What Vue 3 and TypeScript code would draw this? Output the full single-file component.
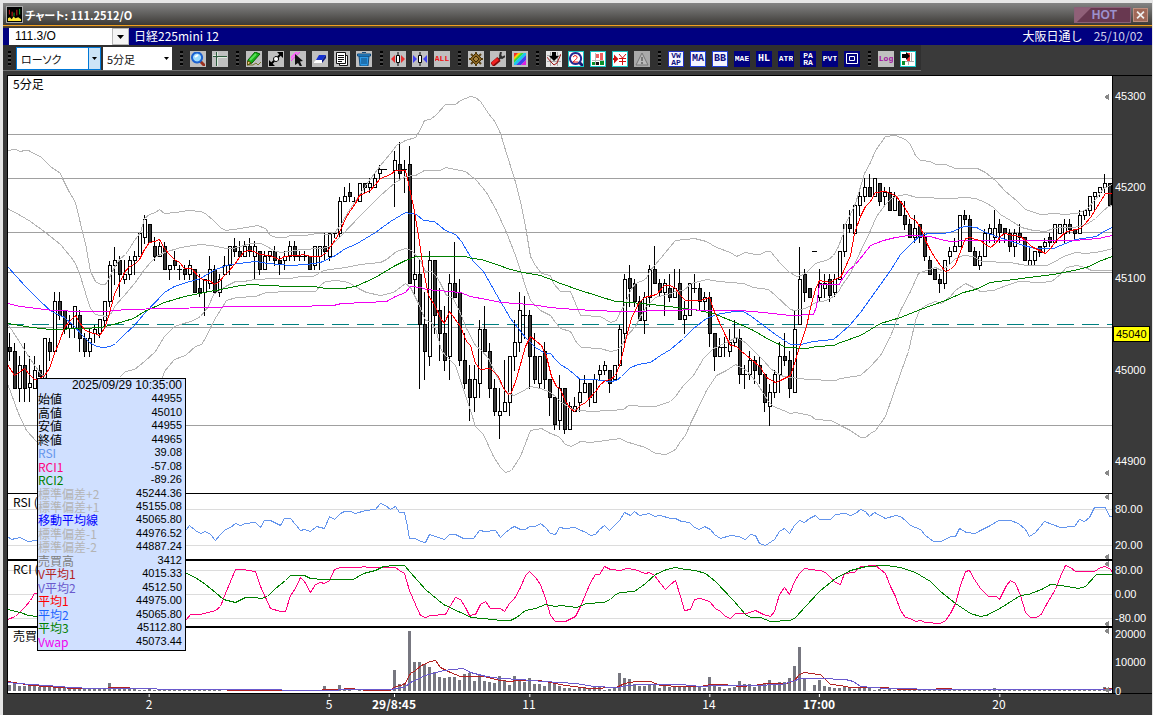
<script setup lang="ts">
import { ref } from 'vue'

type Origin = [number, number]
type Strip = [Origin, string]
interface Shape { d: string; f?: string; s?: string; w?: number }
interface Tool { name: string; bg?: string; border?: string; ink?: string; lines?: string[]; size?: string; shapes?: Shape[] }

/* Traces are digitised in strips: an origin in pixels, then points in thirds of a pixel. */
const A: Origin = [0, 90]
const B: Origin = [280, 90]
const C: Origin = [560, 90]
const D: Origin = [840, 90]
const L: Origin = [0, 370]
const E: Origin = [180, 480]
const F: Origin = [500, 480]
const G: Origin = [820, 480]

function trace(strips: Strip[]): string {
  return strips
    .flatMap(([[ox, oy], pts]) =>
      pts.split(' ').map((p) => {
        const [x, y] = p.split(',').map(Number)
        return `${Math.floor(ox + x / 3) + 0.5},${Math.floor(oy + y / 3) + 0.5}`
      }),
    )
    .join(' ')
}

const upper2 = trace([
  [A, '22,180 45,179 60,183 72,180 85,182 105,193 122,199 150,228 180,249 188,265 205,300 225,337 240,400 255,460 270,545 285,574 300,583 315,583 325,567 345,527 360,505 375,494 388,475 404,452 420,427 434,385 449,372 465,366 479,358 494,369 530,367 565,361 605,364 620,372 640,391 660,412 675,422 700,419 740,412 773,405 795,415 810,435 830,443'],
  [B, '15,443 30,437 75,436 110,431 150,432 165,425 180,405 205,365 240,310 265,275 300,225 330,190 350,167 375,151 405,141 420,117 433,90 450,88 470,73 497,44 525,43 540,31 570,19 585,22 600,35 625,70 645,98 660,130 680,190 703,265 720,335 735,410 750,500 765,525 785,550 810,555 820,580 840,604'],
  [C, '30,605 45,640 62,677 120,679 150,697 170,690 180,665 195,640 210,600 225,580 255,567 270,540 300,505 345,452 404,445 440,453 470,473 510,487 528,498 555,487 585,494 600,493 615,485 630,485 660,519 685,545 710,559 725,555 740,548 765,520 805,508 820,495 835,470 850,430'],
  [D, '14,405 30,372 45,340 74,250 90,218 105,180 135,140 165,137 195,147 212,162 225,197 242,212 270,215 285,222 315,222 345,235 412,235 435,247 465,270 495,305 530,330 555,357 600,374 650,370 670,373 710,371 740,358 765,328 790,295 817,283'],
])
const upper1 = trace([
  [A, '22,354 60,377 90,394 135,428 180,462 210,500 225,520 240,560 262,627 270,655 285,673 300,677 320,680 330,672 345,646 370,620 404,580 434,537 450,517 470,499 494,488 540,472 600,463 635,465 680,474 700,475 720,469 750,461 780,460 795,465 820,482 840,487'],
  [B, '30,485 60,478 125,476 150,470 180,438 240,375 300,315 345,277 375,258 405,255 433,242 480,240 497,233 555,245 570,255 590,272 620,307 650,360 680,427 705,495 720,540 735,590 750,630 780,662 810,675 825,697'],
  [C, '0,714 30,724 50,757 65,772 120,775 150,785 170,782 185,765 200,740 225,710 240,680 260,650 285,622 330,610 345,604 370,600 395,580 440,568 475,575 510,577 550,580 580,593 625,597 645,617 690,657 704,661 735,655 765,637 800,630 820,620 838,600'],
  [D, '0,592 30,550 60,485 90,420 110,378 135,342 150,328 165,320 180,315 200,312 230,321 330,324 380,321 405,324 435,337 460,352 480,372 510,392 545,412 580,422 615,425 640,415 660,412 700,412 740,404 765,385 790,360 805,350 817,347'],
])
const lower1 = trace([
  [A, '22,700 35,718 60,760 90,808 120,850 135,862 200,900 300,905 359,862 375,843 404,838 434,815 465,783 494,740 524,708 580,692 600,680 625,650 640,613 675,590 705,575 730,574 765,569 825,566'],
  [B, '30,565 60,560 100,558 130,542 195,533 240,523 300,518 320,508 350,485 375,474 395,480 420,510 435,545 455,545 470,560 480,580 500,615 520,625 540,670 560,715 585,765 605,782 625,805 650,855 675,905 700,916 720,907 750,888 780,895 810,908 830,922'],
  [C, '0,935 30,955 60,960 90,964 150,961 190,957 205,946 260,948 285,950 330,933 345,920 370,887 400,855 430,805 460,775 500,757 528,742 555,757 580,782 610,812 630,835 660,855 685,862 720,866 740,868 825,871'],
  [D, '0,865 60,857 90,830 120,795 150,740 180,660 210,605 235,550 260,540 285,532 305,540 325,525 345,505 370,496 400,500 425,515 510,517 560,525 620,526 640,517 670,498 705,488 740,491 785,483 817,475'],
])
const lower2 = trace([
  [A, '22,880 55,970 80,1020 110,1055 300,1050 470,900 487,862 494,843 524,808 555,795 585,770 604,762 620,738 635,705 650,680 680,632 710,623 765,620 800,607'],
  [B, '30,605 105,604 125,582 135,575 170,571 205,578 235,595 260,607 300,616 340,607 375,580 390,593 415,640 435,690 450,695 465,715 485,780 500,800 525,825 545,880 570,960 585,1008 610,1033 640,1098 660,1133 677,1147 695,1140 720,1100 750,1020 785,1016 810,1030 835,1038'],
  [C, '0,1044 15,1062 35,1070 60,1054 90,1056 180,1045 195,1055 255,1073 285,1090 320,1092 345,1077 360,1055 375,1035 390,1000 410,965 440,900 470,857 500,840 525,822 560,840 590,877 610,910 625,935 640,950 670,960 690,970 705,967 750,976 765,988 810,992 838,1002'],
  [D, '0,1005 30,1022 60,1042 75,1041 90,1030 105,1022 135,980 180,850 205,785 225,690 237,660 255,647 285,633 305,641 330,620 345,600 375,581 395,588 420,604 460,601 500,586 535,573 600,577 635,573 660,552 680,532 710,526 735,533 755,542 817,541'],
])
const average2 = trace([
  [A, '22,530 75,588 120,633 155,663 194,683 224,708 244,733 269,757 289,769 310,772 330,768 345,760 375,730 400,710 434,670 494,608 524,588 560,577 600,564 640,542 680,526 715,519 765,513 805,519'],
  [B, '30,525 80,522 120,517 165,497 195,475 225,462 285,427 330,395 375,367 410,374 430,390 462,395 497,422 525,433 545,453 580,513 610,545 650,613 690,685 735,742 765,773 795,790 810,791 825,807'],
  [C, '0,823 25,837 60,868 100,868 150,873 170,872 185,860 210,832 235,824 270,817 300,797 330,777 370,745 400,715 440,685 470,673 520,663 550,665 575,678 645,732 690,762 720,762 760,754 820,748'],
  [D, '0,730 30,703 60,667 90,625 120,583 150,542 180,493 210,463 240,435 265,430 310,430 340,424 360,412 380,408 410,412 430,424 470,440 505,452 550,466 585,474 640,474 660,465 705,449 770,439 790,424 817,412'],
])
const average1 = trace([
  [A, '22,822 44,857 60,845 74,835 89,852 104,867 118,865 134,857 149,835 164,790 179,753 194,713 209,695 225,677 239,697 254,718 269,727 284,730 299,735 314,715 325,680 344,613 359,580 374,547 389,530 404,523 419,508 434,477 449,457 464,453 479,448 494,474 509,492 524,507 539,517 554,534 575,535 599,562 613,570 629,572 644,584 659,573 674,555 689,540 704,524 719,502 734,485 749,481 764,483 779,492 809,497 839,508'],
  [B, '14,499 40,497 55,497 70,493 90,499 120,498 140,487 150,470 165,447 180,420 195,385 210,360 225,340 239,316 270,300 300,265 330,252 345,241 375,241 385,280 400,350 415,435 430,540 445,615 465,650 480,685 494,700 509,664 540,710 560,753 570,765 585,820 600,838 630,834 655,860 670,895 685,912 695,907 710,865 735,770 750,740 785,765 800,800 815,860 830,890 838,895'],
  [C, '0,898 15,935 30,955 44,963 60,945 75,937 105,903 120,883 135,870 150,868 165,855 179,826 189,780 200,740 215,685 235,640 254,621 290,614 314,586 330,587 345,595 360,617 375,630 420,631 449,621 460,657 475,690 495,735 510,765 530,770 545,785 570,805 600,832 620,862 645,877 660,870 690,857 700,830 715,780 740,710 755,640 765,598 779,572 810,577 830,565 838,563'],
  [D, '0,562 10,545 30,495 44,430 60,380 75,350 90,335 105,308 135,303 165,317 190,345 212,382 225,390 240,412 255,450 270,480 285,505 300,527 315,543 330,538 345,522 360,485 375,445 390,442 405,447 420,452 435,463 450,473 465,460 480,440 494,430 520,437 540,440 555,450 575,470 615,491 630,475 650,450 680,425 720,415 735,400 750,383 765,358 780,333 795,310 817,310'],
])
const average3 = trace([
  [A, '22,699 75,710 120,716 150,718 254,716 300,713 340,703 400,684 434,665 494,637 554,620 613,607 675,594 720,585 755,583 800,586'],
  [B, '30,589 100,589 140,595 190,595 225,588 285,561 340,528 375,510 410,499 555,499 575,505 605,507 650,523 690,537 730,547 780,557 820,570'],
  [C, '0,580 60,601 165,633 210,636 300,645 400,657 460,670 540,702 580,722 630,750 680,773 740,776 770,769 820,765'],
  [D, '0,758 60,735 120,700 180,682 240,658 315,630 370,606 405,597 450,578 500,572 545,564 640,553 700,542 740,532 785,512 817,499'],
])
const vwap = trace([
  [A, '22,641 60,648 110,656 160,660 245,664 320,664 375,659 500,655 640,652 700,649'],
  [B, '30,649 160,646 185,641 260,637 320,635 345,620 375,608 390,589 420,592 440,599 540,607 570,620 620,627 665,636 750,644 810,653'],
  [C, '0,655 100,660 180,664 340,661 400,657 420,660 540,662 610,667 690,675 760,673 770,650 779,583 838,583'],
  [D, '0,575 25,541 45,522 70,493 90,467 130,452 165,442 205,436 270,438 300,449 330,453 380,451 700,451 775,444 817,436'],
])
const priceLines = [
  { pts: upper2, color: '#b4b4b4' },
  { pts: upper1, color: '#b4b4b4' },
  { pts: lower1, color: '#b4b4b4' },
  { pts: lower2, color: '#b4b4b4' },
  { pts: average2, color: '#1e64ff' },
  { pts: average3, color: '#008000' },
  { pts: vwap, color: '#f000f0' },
  { pts: average1, color: '#ff0000' },
]

const rsi = trace([
  [L, '22,499 35,508 45,506 60,501 75,512 85,514 110,511'],
  [E, '18,147 28,137 45,150 60,160 75,154 90,163 105,181 120,162 135,148 150,142 165,130 180,135 195,130 225,127 240,142 254,121 270,121 300,137 314,115 330,115 345,133 360,151 374,147 390,154 410,140 433,145 449,109 464,118 480,100 494,94 512,94 527,100 555,92 585,88 601,70 615,75 630,87 645,78 658,97 674,98 682,140 688,175 705,175 720,184 735,188 748,163 793,179 808,163 825,163 850,175 880,175 899,151 915,154 945,151'],
  [F, '0,172 14,161 30,145 44,139 60,148 75,147 89,140 105,139 120,130 135,142 150,160 165,162 179,142 195,145 225,143 240,152 254,154 270,167 285,162 299,148 314,137 329,150 358,121 374,97 390,106 404,94 419,106 449,101 464,109 480,107 510,115 525,116 545,123 569,127 584,143 597,148 614,139 630,148 644,163 660,175 690,166 715,170 735,178 750,162 765,167 779,190 795,196 824,178 839,154 854,145 869,160 884,136 899,121 914,128 929,115 945,106 958,118'],
  [G, '0,118 30,118 45,104 75,100 90,106 105,100 120,88 135,94 149,109 164,97 195,115 225,105 240,110 255,120 270,136 300,147 315,166 340,184 360,184 375,179 390,168 405,169 419,145 440,156 465,160 480,150 510,137 535,121 570,121 595,131 615,148 629,169 645,157 673,124 720,142 762,139 779,118 794,123 809,111 824,83 855,83 869,109 877,109'],
])
const rci1 = trace([
  [L, '22,748 45,738 60,724 75,708 90,690 102,670 111,670 300,560 500,750'],
  [E, '18,418 30,404 60,404 105,391 120,380 135,340 150,305 165,268 190,268 205,272 225,275 240,318 255,352 270,386 300,394 315,394 330,345 345,325 360,292 374,303 390,337 405,314 420,307 434,311 449,300 464,268 480,262 540,262 550,260 565,262 645,262 658,272 673,280 688,330 705,373 720,405 735,412 750,406 795,403 810,375 827,351 840,357 855,382 869,405 885,404 900,373 915,364 930,385 955,385'],
  [F, '0,385 14,394 29,370 44,354 60,322 75,285 89,275 105,291 120,312 135,355 150,407 165,423 195,424 225,408 240,380 255,342 270,307 285,284 299,282 314,259 330,269 360,270 380,265 404,267 435,280 449,278 464,287 480,310 495,328 510,313 525,301 540,350 554,391 570,388 584,358 600,355 629,365 645,385 660,393 675,410 690,415 707,400 740,401 765,391 790,403 810,409 824,394 839,342 854,322 869,342 884,303 899,281 914,265 930,268 955,271'],
  [G, '0,271 15,278 30,292 45,308 60,313 74,281 104,277 120,258 165,256 180,269 195,280 210,320 225,348 240,390 255,411 270,414 285,424 300,421 315,427 360,430 375,421 390,400 405,370 420,315 435,275 449,271 464,297 480,325 505,348 530,350 539,357 560,315 571,300 585,310 600,345 615,397 630,411 645,412 660,405 680,373 705,328 720,290 735,256 750,261 765,274 824,274 840,261 855,260 870,267 877,278'],
])
const rci2 = trace([
  [L, '22,717 60,728 85,737 111,740 300,640 500,575'],
  [E, '18,280 45,292 75,312 105,338 130,358 165,368 195,353 220,352 245,356 262,350 285,325 315,302 330,287 372,287 390,296 430,297 520,298 550,281 585,270 610,260 645,256 673,256 690,278 735,328 790,373 840,397 875,411 940,419'],
  [F, '0,421 30,421 50,411 75,392 105,385 135,373 165,380 185,376 230,382 260,370 310,367 330,358 345,342 360,338 404,333 435,309 465,283 500,267 525,262 555,268 585,271 615,280 645,304 700,360 735,403 750,411 780,413 810,424 870,421 885,412 915,379 955,337'],
  [G, '0,331 45,295 90,272 140,260 200,256 240,262 285,276 330,303 360,334 405,370 450,400 480,409 500,405 545,382 600,347 625,342 665,328 690,313 720,316 775,325 795,319 829,283 877,283'],
])
const volumeAvg1 = trace([
  [L, '22,933 60,939 90,945 140,950 220,955 270,956 380,952 400,956'],
  [E, '0,629 130,629 150,632 420,631 430,629 470,628 515,625 560,630 630,631 645,620 673,612 690,580 705,570 725,555 750,545 765,541 780,563 810,577 840,589 910,589'],
  [F, '0,600 30,604 50,600 115,600 150,606 195,615 270,624 350,622 374,611 405,604 450,604 480,615 540,619 600,618 630,613 670,614 720,619 760,615 800,611 860,609 884,600 899,583 914,577 955,582'],
  [G, '0,583 15,598 30,614 60,616 90,622 195,623 240,627 320,628 380,625 410,628 845,628 860,625 877,625'],
])
const volumeAvg2 = trace([
  [L, '22,938 90,942 140,947 210,953 280,955 400,956'],
  [E, '0,628 135,629 470,630 480,628 550,629 635,628 645,625 673,621 690,607 735,587 790,571 850,565 870,577 920,589'],
  [F, '0,595 60,597 130,603 230,609 280,619 350,621 410,613 540,612 600,619 650,615 760,615 845,612 885,600 899,596 955,596'],
  [G, '0,595 75,598 100,604 120,619 200,624 380,627 877,628'],
])

/* One candle every 5px: high, body top, body bottom, low (thirds of a pixel), then w = rising, k = falling, d = flat; x = no trade. */
const candleData =
  '730,772,785,812,k;760,784,895,895,k;798,826,895,935,w;760,826,895,935,k;800,880,893,935,w;798,840,895,895,w;825,840,860,860,k;745,745,865,865,w;745,757,784,812,k;607,634,784,784,w;' +
  '607,634,676,688,k;662,662,715,730,k;675,703,715,742,w;648,648,716,742,w;662,675,745,785,k;730,745,785,800,k;715,745,785,800,w;705,718,730,757,w;688,688,730,742,w;634,634,690,705,w;' +
  '515,526,634,648,w;472,511,526,582,w;498,511,553,620,k;511,553,567,580,w;498,511,553,567,w;483,498,511,553,w;430,430,500,500,w;375,388,442,460,w;403,403,457,457,k;442,469,500,512,k;' +
  '457,469,500,500,w;457,469,539,539,k;526,526,539,567,w;483,511,526,539,k;526,539,539,567,d;526,539,553,567,k;511,526,553,567,w;539,539,607,607,k;553,594,607,620,k;567,567,607,677,w;' +
  '498,539,580,594,w;526,539,607,607,k;553,567,607,620,w;498,526,553,553,w;469,469,526,553,w;444,469,484,500,k;455,484,500,500,k;455,469,500,500,w;444,469,484,498,k;455,469,500,567,w;' +
  '484,484,539,553,k;484,498,539,539,w;484,484,498,511,w;470,484,511,526,k;498,511,520,553,k;484,498,511,539,w;455,469,498,511,w;455,469,498,511,k;484,498,498,511,d;484,498,498,511,d;' +
  '498,498,539,539,k;469,469,526,539,w;469,469,500,539,w;430,469,484,511,k;430,430,498,511,w;430,430,430,442,d;322,335,430,442,w;293,318,333,333,w;280,307,318,333,k;321,333,333,333,d;' +
  '280,280,333,333,w;280,280,293,307,k;265,280,293,307,w;250,265,293,293,w;225,238,250,265,w;238,238,238,238,d;x;183,211,240,348,w;156,224,250,265,k;211,238,238,307,d;' +
  '169,224,580,580,k;375,553,567,620,w;511,553,703,895,k;607,703,784,867,k;484,511,800,827,w;511,511,676,730,k;594,662,730,812,k;648,730,812,840,k;553,580,800,867,w;457,580,622,622,k;' +
  '567,607,812,827,k;730,812,880,895,k;827,867,922,990,k;827,867,922,963,w;690,717,880,922,w;648,717,784,784,k;760,784,895,922,k;867,895,963,977,k;895,963,977,1046,w;812,937,963,963,w;' +
  '800,800,937,977,w;690,757,800,840,w;607,662,757,784,w;620,676,676,745,d;662,676,800,895,k;730,800,867,880,k;800,800,880,895,w;757,784,867,895,k;867,867,922,977,k;922,922,1004,1018,k;' +
  '855,895,991,1018,w;895,895,1018,1030,k;937,950,1018,1018,w;922,950,963,963,w;867,908,937,963,w;855,880,908,908,w;880,880,922,950,k;853,868,937,937,w;825,840,853,867,w;813,826,840,853,w;' +
  '840,840,880,908,k;825,826,868,868,w;705,717,826,826,w;553,567,730,757,w;526,565,594,648,k;567,580,634,648,k;620,634,690,690,k;607,622,690,730,w;526,539,622,648,w;470,539,580,580,k;' +
  '567,580,607,620,k;567,580,607,676,w;553,594,622,634,k;539,594,622,622,w;539,580,688,688,k;634,676,688,730,w;580,580,676,676,w;553,594,594,607,d;580,594,634,662,k;607,622,634,662,w;' +
  '607,622,730,770,k;730,730,800,840,k;745,772,800,800,w;742,772,772,800,d;717,757,785,800,w;690,745,757,770,w;717,745,853,880,k;825,853,853,895,d;785,812,853,867,w;800,812,840,880,k;' +
  '798,826,853,880,k;853,853,937,963,k;882,908,950,1006,w;840,853,908,922,w;757,798,853,908,w;730,798,812,826,k;785,812,895,922,k;662,717,908,908,w;472,567,703,703,w;539,553,607,634,k;' +
  '594,594,622,622,k;484,484,484,484,d;539,580,622,634,w;553,580,594,622,w;553,567,615,634,k;553,567,607,620,w;484,484,567,567,w;403,403,484,498,w;360,403,415,427,k;346,346,430,430,w;' +
  '307,319,346,375,w;265,292,319,333,w;252,292,319,319,k;265,265,319,319,w;280,280,335,347,k;293,307,319,347,w;293,307,361,361,k;307,319,361,361,w;333,333,375,375,k;333,375,403,417,k;' +
  '388,403,442,442,k;375,415,442,457,w;403,403,442,457,k;430,442,498,511,k;498,511,553,553,k;539,539,567,567,k;553,567,580,607,k;511,511,580,594,w;472,484,500,522,w;444,469,484,484,w;' +
  '375,375,469,469,w;361,375,388,403,k;375,388,484,484,k;472,484,526,526,k;484,498,526,539,w;417,430,498,498,w;403,415,430,457,w;361,415,442,457,w;388,403,427,457,k;415,415,430,457,k;' +
  '417,430,469,484,k;417,430,469,498,w;403,430,442,457,k;442,442,511,511,k;472,511,526,526,w;484,484,511,522,w;469,469,487,498,k;444,457,469,484,w;430,442,457,469,k;403,403,457,457,w;' +
  '403,403,430,430,w;388,403,430,457,w;388,403,417,430,k;417,417,430,444,k;361,375,430,430,w;361,361,375,388,w;319,319,361,375,w;307,307,319,361,w;292,292,307,319,w;252,280,292,307,w;280,280,347,347,k'

const candles = candleData.split(';').flatMap((row, i) => {
  if (row === 'x') return []
  const [h, t, b, l, kind] = row.split(',')
  const y = (v: string) => 90 + Math.floor(Number(v) / 3)
  return [{ x: 9 + 5 * i, high: y(h), top: y(t), bottom: y(b), low: y(l) + 1, kind }]
})

const volumes = [
  '6 9 5 5 5 5 4 5 4 5', '4 4 4 3 3 3 3 2 2 2', '8 3 2 2 2 2 1 1 2 1', '1 1 1 1 1 1 1 1 1 1', '1 1 1 0 0 0 0 0 0 2',
  '0 0 0 0 0 0 0 0 0 0', '0 0 0 5 1 1 6 2 2 0', '1 0 0 0 0 0 0 21 7 8', '60 29 29 27 24 19 14 13 14 14', '11 17 18 10 17 10 9 8 15 10',
  '6 15 11 9 13 7 7 5 9 9', '5 3 3 2 3 3 3 4 4 1', '2 4 18 13 12 7 5 5 7 7', '3 5 4 4 5 4 5 5 5 3', '14 7 4 2 3 4 10 7 7 4',
  '6 8 11 6 9 9 13 25 44 12', '0 6 11 5 4 3 3 4 4 2', '3 3 3 1 2 1 3 1 2 2', '1 2 2 2 1 2 2 1 1 1', '1 1 1 1 1 1 1 3 1 1',
  '1 1 1 1 1 1 1 1 1 1', '1 1 1 1 1 1 1 1 1 4', '2',
]
const bars = volumes.join(' ').split(' ').map((v, i) => ({ x: 8 + 5 * i, h: Number(v) }))

const levels = [134, 178, 232, 272, 327, 425]

const axes = {
  price: [['45300', 96], ['45200', 187], ['45100', 278], ['45000', 370], ['44900', 461]],
  rsi: [['80.00', 509], ['20.00', 545]],
  rci: [['80.00', 570], ['0.00', 594], ['-80.00', 618]],
  volume: [['20000', 634], ['10000', 662], ['0', 691]],
} as Record<string, [string, number][]>

const axisTop = (y: number, top: number, height: number) => ({ top: `${((y - top) / height) * 100}%` })

const times = [
  { label: '2', x: 149 },
  { label: '5', x: 329 },
  { label: '29/8:45', x: 394, bold: true },
  { label: '11', x: 529 },
  { label: '14', x: 709 },
  { label: '17:00', x: 819, bold: true },
  { label: '20', x: 999 },
]
const timeLeft = (x: number) => ({ left: `${((x - 8) / 1104) * 100}%` })

const marker = (y: number) => `M1104,${y}L1109,${y - 3}V${y + 3}Z`

const readout = [
  ['始値', '44955', '#000'],
  ['高値', '45010', '#000'],
  ['安値', '44955', '#000'],
  ['終値', '44965', '#000'],
  ['RSI', '39.08', '#6495ed'],
  ['RCI1', '-57.08', '#ff0080'],
  ['RCI2', '-89.26', '#008000'],
  ['標準偏差+2', '45244.36', '#b4b4b4'],
  ['標準偏差+1', '45155.08', '#b4b4b4'],
  ['移動平均線', '45065.80', '#0000ff'],
  ['標準偏差-1', '44976.52', '#b4b4b4'],
  ['標準偏差-2', '44887.24', '#b4b4b4'],
  ['売買高', '3412', '#808080'],
  ['V平均1', '4015.33', '#b22222'],
  ['V平均2', '4512.50', '#6a5acd'],
  ['平均1', '44975.00', '#ff0000'],
  ['平均2', '45065.80', '#1e64ff'],
  ['平均3', '45112.80', '#008000'],
  ['Vwap', '45073.44', '#f000f0'],
]

const candleIcon = 'M6.5,4.5H9.5V11.5H6.5ZM8,1V4M8,12V15'
const groups: Tool[][] = [
  [
    { name: '検索', shapes: [
      { d: 'M10,10L15,15', s: '#9a3020', w: 3 },
      { d: 'M7,1.5a5,5 0 1,0 .1,0Z', f: '#9cdcff', s: '#1c62d0', w: 2 },
      { d: 'M5,6L8,4', s: '#fff', w: 2 } ] },
    { name: '十字線', shapes: [
      { d: 'M4.5,0V16M0,5.5H16', s: '#2c5a3c', w: 1 },
      { d: 'M5.5,0V5M0,4.5H4M6,6.5H16M5.5,7V16', s: '#e0ece0', w: 1 } ] },
  ],
  [
    { name: '描画', shapes: [
      { d: 'M2,14H7L10,12L12,14L15,11', s: '#7a7430', w: 1 },
      { d: 'M2,9L9,1L14,3L6,12L1,14Z', f: '#18b018', s: '#056005', w: 1 },
      { d: 'M4,9L10,3', s: '#58e058', w: 2 },
      { d: 'M2,10L5,12L1,14Z', f: '#ffe9a0', s: '#604000', w: 1 } ] },
    { name: '移動', shapes: [
      { d: 'M3,13L13,3', s: '#000', w: 2 },
      { d: 'M9,1H15V7ZM1,9V15H7Z', f: '#000' },
      { d: 'M8,5.5a2.5,2.5 0 1,0 .1,0Z', f: '#fff', s: '#000', w: 1 } ] },
    { name: '選択', shapes: [
      { d: 'M0,11L11,0', s: '#ff30ff', w: 1 },
      { d: 'M0,8L8,0', s: '#ff60ff', w: 2 },
      { d: 'M5,3L13,10L10,10.5L12,15L10,15.5L8,12L5,14Z', f: '#111' } ] },
    { name: '消しゴム', shapes: [
      { d: 'M7,4H14L10,9H4Z', f: '#1430d0' },
      { d: 'M14,4V7L10,12V9Z', f: '#0a1880' },
      { d: 'M4,9H10V12H2V11Z', f: '#fff' } ] },
    { name: '一覧', shapes: [
      { d: 'M5.5,4.5H13.5V14.5H5.5Z', f: '#fff', s: '#111', w: 1 },
      { d: 'M2.5,1.5H11.5V12.5H2.5Z', f: '#fff', s: '#111', w: 1 },
      { d: 'M4,4.5H10M4,6.5H10M4,8.5H10M4,10.5H8', s: '#111', w: 1 } ] },
    { name: '削除', shapes: [
      { d: 'M3,5H13L12,15H4Z', f: '#2c9ae8', s: '#104878', w: 1 },
      { d: 'M1.5,3H14.5V5H1.5Z', f: '#2c9ae8', s: '#104878', w: 1 },
      { d: 'M6,1.5H10', s: '#104878', w: 1 },
      { d: 'M6,7V13M8,7V13M10,7V13', s: '#104878', w: 1 } ] },
  ],
  [
    { name: '拡大', shapes: [
      { d: candleIcon, f: '#fff', s: '#000', w: 1 },
      { d: 'M1,8L5,4V12ZM15,8L11,4V12Z', f: '#e83030' } ] },
    { name: '縮小', shapes: [
      { d: candleIcon, f: '#fff', s: '#000', w: 1 },
      { d: 'M5,8L1,4V12ZM11,8L15,4V12Z', f: '#4040f0' } ] },
    { name: 'ALL', ink: '#f01010', lines: ['ALL'], size: 's8' },
  ],
  [
    { name: '設定', shapes: [
      { d: 'M8,1V15M1,8H15M3,3L13,13M13,3L3,13', s: '#5c4418', w: 2 },
      { d: 'M8,2L14,8L8,14L2,8Z', f: '#8a6420', s: '#4a3408', w: 1 },
      { d: 'M8,5L11,8L8,11L5,8Z', f: '#a88440', s: '#3c2804', w: 1 } ] },
    { name: 'ツール', shapes: [
      { d: 'M8,9L12,5', s: '#303030', w: 2 },
      { d: 'M11,1L10,5L12,7L15,5', s: '#303030', w: 2 },
      { d: 'M2,14L9,8', s: '#800808', w: 5 },
      { d: 'M2,13L8,8', s: '#f02020', w: 3 } ] },
    { name: '色', shapes: [
      { d: 'M2,2H8L2,8Z', f: '#f03030' },
      { d: 'M6,2H10L2,10V6Z', f: '#ffc800' },
      { d: 'M9,2H12L2,12V9Z', f: '#30e040' },
      { d: 'M12,2H14V4L4,14H2V12Z', f: '#18c8f0' },
      { d: 'M14,4V9L9,14H4Z', f: '#4040f0' },
      { d: 'M14,9V14H9Z', f: '#e020e0' } ] },
  ],
  [
    { name: '指標', bg: '#e8e8e8', shapes: [
      { d: 'M0,4.5H16M0,10.5H16M4.5,0V16M11.5,0V16', s: '#aaa', w: 1 },
      { d: 'M0,5L5,11L8,14L11,12L15,3', s: '#a01818', w: 1 },
      { d: 'M6,1H10V5H13L8,10L3,5H6Z', f: '#000' } ] },
    { name: '拡大表示', bg: '#fff', border: '#18c8c8', shapes: [
      { d: 'M11,11L15,15', s: '#181870', w: 3 },
      { d: 'M7.5,2a5.5,5.5 0 1,0 .1,0Z', f: '#fff', s: '#282890', w: 2 },
      { d: 'M5,6Q7,3 9,5.5Q10,7 5,11H10', s: '#f01818', w: 1 } ] },
    { name: '出来高', bg: '#fff', border: '#18c8c8', shapes: [
      { d: 'M2,9.5H14M5.5,2V14', s: '#bbb', w: 1 },
      { d: 'M6,3H9V7H6ZM10,2H13V9H10Z', f: '#f06060' },
      { d: 'M2,11H5V14H2ZM10,10H14V14H10Z', f: '#089028' },
      { d: 'M6,11H9V14H6Z', f: '#111' } ] },
    { name: '円', bg: '#fff', border: '#18c8c8', shapes: [
      { d: 'M1,8H5M3,6L5,8L3,10Z', f: '#d01010', s: '#d01010', w: 2 },
      { d: 'M7,3L10.5,7L14,3M7,7.5H14M7,10.5H14M10.5,7V14', s: '#d01010', w: 1 } ] },
    { name: '警告', bg: '#aaa', shapes: [
      { d: 'M8,2L14,14H2Z', f: '#bbb', s: '#777', w: 1 },
      { d: 'M8,6V10M8,11V13', s: '#777', w: 2 } ] },
  ],
  [
    { name: 'VWAP', bg: '#f4f4ff', border: '#2030c0', ink: '#101080', lines: ['VW', 'AP'], size: 's8' },
    { name: 'MA', bg: '#f4f4ff', border: '#2040d8', ink: '#101080', lines: ['MA'], size: 's10' },
    { name: 'BB', bg: '#f4f4ff', border: '#2040d8', ink: '#101080', lines: ['BB'], size: 's10' },
    { name: 'MAE', bg: '#000080', ink: '#fff', lines: ['MAE'], size: 's8' },
    { name: 'HL', bg: '#000080', ink: '#fff', lines: ['HL'], size: 's10' },
    { name: 'ATR', bg: '#000080', ink: '#fff', lines: ['ATR'], size: 's8' },
    { name: 'PARA', bg: '#000080', ink: '#fff', lines: ['PA', 'RA'], size: 's8' },
    { name: 'PVT', bg: '#000080', ink: '#fff', lines: ['PVT'], size: 's8' },
    { name: '枠', bg: '#000080', shapes: [
      { d: 'M2.5,2.5H13.5V12.5H2.5ZM5.5,5.5H10.5V9.5H5.5Z', s: '#fff', w: 1 } ] },
  ],
  [
    { name: 'Log', ink: '#a010a0', lines: ['Log'], size: 's8' },
    { name: '表示', bg: '#fff', border: '#18c8c8', shapes: [
      { d: 'M2,10.5H14M8.5,10V14M11.5,2V10', s: '#aaa', w: 1 },
      { d: 'M7,2H10V10H7Z', f: '#f03030' },
      { d: 'M2,10H5V14H2Z', f: '#089028' },
      { d: 'M2,3H6V1L10,5L6,9V7H2Z', f: '#000' } ] },
  ],
]

const symbol = ref('111.3/O')
const chartType = ref('ローソク')
const interval = ref('5分足')
</script>

<template>
  <main class="window">
    <header class="title-bar">
      <svg class="app-icon" viewBox="0 0 16 16" aria-hidden="true">
        <path d="M0,0H16V16H0Z" fill="#000" />
        <path d="M1,15V12L3,11L5,13L7,10L9,12L12,11L15,13V15Z" fill="#ffe838" />
        <path d="M2.5,3V8M5.5,5V10M10.5,3V9" stroke="#e02020" />
        <path d="M7.5,6V10M13.5,2V8" stroke="#18b030" />
      </svg>
      <h1>チャート: 111.2512/O</h1>
      <button class="hot" type="button">HOT</button>
      <button class="close" type="button" aria-label="閉じる">
        <svg viewBox="0 0 14 14"><path d="M3,3L11,11M11,3L3,11" stroke="#eee" stroke-width="2" /></svg>
      </button>
    </header>

    <section class="symbol-bar">
      <div class="symbol-box">
        <input v-model="symbol" type="text" aria-label="銘柄コード" />
        <button type="button" aria-label="銘柄一覧">
          <svg viewBox="0 0 7 4"><path d="M0,0H7L3.5,4Z" /></svg>
        </button>
      </div>
      <span>日経225mini 12</span>
      <span class="session">大阪日通し</span>
      <span class="date">25/10/02</span>
    </section>

    <nav class="toolbar">
      <i class="grip"></i>
      <label class="picker active">
        <select v-model="chartType" aria-label="チャート種類"><option>ローソク</option></select>
        <span class="drop"><svg viewBox="0 0 5 3"><path d="M0,0H5L2.5,3Z" /></svg></span>
      </label>
      <label class="picker short">
        <select v-model="interval" aria-label="足種"><option>5分足</option></select>
        <span class="drop"><svg viewBox="0 0 5 3"><path d="M0,0H5L2.5,3Z" /></svg></span>
      </label>
      <template v-for="(group, g) in groups" :key="g">
        <i class="grip"></i>
        <div class="tools">
          <button
            v-for="tool in group"
            :key="tool.name"
            class="tool"
            type="button"
            :aria-label="tool.name"
            :style="{ background: tool.bg ?? '#c0c0c0', color: tool.ink, borderColor: tool.border ?? 'transparent' }"
          >
            <svg v-if="tool.shapes" viewBox="0 0 16 16">
              <path v-for="(p, n) in tool.shapes" :key="n" :d="p.d" :fill="p.f ?? 'none'" :stroke="p.s ?? 'none'" :stroke-width="p.w" />
            </svg>
            <span v-else :class="[tool.size, { two: tool.lines?.length === 2 }]">
              <b v-for="line in tool.lines" :key="line">{{ line }}</b>
            </span>
          </button>
        </div>
      </template>
    </nav>

    <section class="chart">
      <div class="pane price">
        <svg viewBox="8 76 1104 417" preserveAspectRatio="none">
          <path v-for="y in levels" :key="y" :d="`M8,${y}.5H1112`" stroke="#a0a0a0" />
          <path d="M7,324.5H1112" stroke="#008080" stroke-dasharray="17 8" />
          <g v-for="c in candles" :key="c.x">
            <rect :x="c.x" :y="c.high" width="1" :height="c.low - c.high" fill="#000" />
            <rect v-if="c.kind === 'd'" :x="c.x - 2" :y="c.top" width="5" height="1" fill="#000" />
            <rect
              v-else
              :x="c.x - 0.5"
              :y="c.top + 0.5"
              width="3"
              :height="Math.max(c.bottom - c.top, 3)"
              :fill="c.kind === 'w' ? '#fff' : '#383838'"
              stroke="#000"
            />
          </g>
          <polyline v-for="(l, n) in priceLines" :key="n" :points="l.pts" :stroke="l.color" fill="none" />
          <path :d="marker(97) + marker(473)" fill="#888" />
        </svg>
        <span class="pane-label">5分足</span>
      </div>
      <div class="axis">
        <span v-for="[t, y] in axes.price" :key="t" :style="axisTop(y, 76, 417)">{{ t }}</span>
        <strong :style="axisTop(334, 76, 417)">45040</strong>
      </div>

      <div class="pane rsi">
        <svg viewBox="8 494 1104 65" preserveAspectRatio="none">
          <path d="M8,509.5H1112M8,545.5H1112" stroke="#dcdcdc" />
          <polyline :points="rsi" stroke="#6495ed" fill="none" />
          <path :d="marker(497) + marker(557)" fill="#888" />
        </svg>
        <span class="pane-label">RSI (</span>
      </div>
      <div class="axis">
        <span v-for="[t, y] in axes.rsi" :key="t" :style="axisTop(y, 493, 66)">{{ t }}</span>
      </div>

      <div class="pane">
        <svg viewBox="8 561 1104 65" preserveAspectRatio="none">
          <path d="M8,570.5H1112M8,594.5H1112M8,618.5H1112" stroke="#dcdcdc" />
          <polyline :points="rci1" stroke="#ff0080" fill="none" />
          <polyline :points="rci2" stroke="#008000" fill="none" />
          <path :d="marker(564) + marker(624)" fill="#888" />
        </svg>
        <span class="pane-label">RCI (</span>
      </div>
      <div class="axis">
        <span v-for="[t, y] in axes.rci" :key="t" :style="axisTop(y, 559, 67)">{{ t }}</span>
      </div>

      <div class="pane">
        <svg viewBox="8 628 1104 65" preserveAspectRatio="none">
          <rect v-for="b in bars" :key="b.x" :x="b.x" :y="691 - b.h" width="3" :height="b.h" fill="#777780" />
          <polyline :points="volumeAvg1" stroke="#b22222" fill="none" />
          <polyline :points="volumeAvg2" stroke="#6a5acd" fill="none" />
          <path :d="marker(631) + marker(690)" fill="#888" />
        </svg>
        <span class="pane-label">売買</span>
      </div>
      <div class="axis">
        <span v-for="[t, y] in axes.volume" :key="t" :style="axisTop(y, 626, 67)">{{ t }}</span>
      </div>

      <table class="readout">
        <thead>
          <tr><th colspan="2">2025/09/29 10:35:00</th></tr>
        </thead>
        <tbody>
          <tr v-for="[name, value, color] in readout" :key="name">
            <th scope="row" :style="{ color }">{{ name }}</th>
            <td>{{ value }}</td>
          </tr>
        </tbody>
      </table>
    </section>

    <footer class="time-axis">
      <span v-for="t in times" :key="t.x" :class="{ bold: t.bold }" :style="timeLeft(t.x)">{{ t.label }}</span>
    </footer>
  </main>
</template>

<style>
body {
  background: #3a3a3a;
}
</style>

<style scoped>
.window {
  box-sizing: border-box;
  display: flex;
  flex-direction: column;
  min-height: 100vh;
  border: solid #e6e6e6;
  border-width: 3px 1px 0 3px;
  background: #3a3a3a;
  color: #fff;
  font: 12px/14px "Noto Sans CJK JP", "Liberation Sans", sans-serif;
}
.window * {
  box-sizing: border-box;
}
button,
input,
select {
  margin: 0;
  padding: 0;
  border: 0;
  border-radius: 0;
  font: inherit;
  color: inherit;
}
.title-bar {
  display: flex;
  align-items: center;
  height: 25px;
  padding: 0 4px 2px 3px;
  background: linear-gradient(#848484, #3c3a36 22px, #f0a020 22px, #f0a020 23px, #5a4830 23px, #3a3630);
}
.app-icon {
  width: 17px;
  height: 17px;
  border: 1px solid #aaa;
}
h1 {
  flex: 1;
  margin: 0 0 0 2px;
  font-size: 11px;
  line-height: 16px;
  font-weight: 700;
  font-feature-settings: "palt";
}
.hot {
  width: 57px;
  height: 16px;
  margin-right: 2px;
  padding-left: 4px;
  border: 1px solid #8a6078;
  background: linear-gradient(135deg, #906078 0 22%, #683850 24%);
  color: #9c90cc;
  font: bold 12px/14px "Liberation Sans", sans-serif;
}
.close {
  width: 15px;
  height: 14px;
  border: 1px solid #c09080;
  background: #a06858;
}
.close svg {
  display: block;
  width: 100%;
  height: 100%;
}
.symbol-bar {
  display: flex;
  align-items: center;
  height: 17px;
  padding: 0 9px 2px 6px;
  background: #000080;
}
.symbol-box {
  display: flex;
  height: 17px;
  width: 120px;
  margin: 0 5px -2px 0;
  background: #fff;
  color: #000;
}
.symbol-box input {
  flex: 1;
  min-width: 0;
  padding: 0 0 2px 6px;
  background: none;
  font-family: "Liberation Sans", "Noto Sans CJK JP", sans-serif;
}
.symbol-box button {
  display: grid;
  place-items: center;
  width: 17px;
  border: 1px solid #b8b8b8;
  background: #f4f4f4;
}
.symbol-box svg {
  width: 7px;
  height: 4px;
}
.session {
  margin-left: auto;
}
.date {
  margin-left: 11px;
  color: #d0d0e8;
}
.toolbar {
  display: flex;
  align-items: center;
  align-self: flex-start;
  height: 26px;
  padding: 2px 5px 0 0;
  border-bottom: 1px solid #707070;
  background: #303030;
}
.grip {
  width: 3px;
  height: 15px;
  margin: 0 7px 0 8px;
  background: repeating-linear-gradient(#000 0 2px, #484848 2px 4px);
}
.grip:first-child {
  margin: 0 5px;
}
.picker {
  position: relative;
  display: flex;
  width: 85px;
  height: 23px;
  background: #fff;
  color: #111;
  font-size: 11px;
}
.picker.active {
  border: 1px solid #0078d7;
}
.picker.short {
  width: 69px;
  margin-left: 2px;
}
.picker select {
  flex: 1;
  min-width: 0;
  padding-left: 4px;
  appearance: none;
  background: none;
  font-feature-settings: "palt";
}
.drop {
  display: grid;
  place-items: center;
  width: 12px;
  pointer-events: none;
}
.active .drop {
  border-left: 1px solid #0078d7;
  background: #cce4f7;
}
.drop svg {
  width: 5px;
  height: 3px;
}
.tools {
  display: flex;
  gap: 6px;
}
.tool {
  display: grid;
  place-items: center;
  width: 16px;
  height: 16px;
  border: 1px solid transparent;
  overflow: hidden;
}
.tool svg {
  width: 16px;
  height: 16px;
  margin: -1px;
}
.tool span {
  display: grid;
  justify-items: center;
  margin: 0 -4px;
  font-family: "Liberation Mono", monospace;
}
.s8 {
  font-size: 8px;
  line-height: 10px;
}
.s10 {
  font-size: 10px;
  line-height: 12px;
}
.two {
  line-height: 7px;
}
.chart {
  position: relative;
  flex: 1;
  display: grid;
  grid-template-columns: minmax(0, 1fr) 39px;
  grid-template-rows: minmax(0, 417fr) minmax(0, 66fr) minmax(0, 67fr) minmax(0, 67fr);
  margin: 4px 0 0 4px;
  border: solid #000;
  border-width: 1px 0 1px 1px;
}
.pane {
  position: relative;
  border: solid #000;
  border-width: 2px 1px 0 0;
  background: #fff;
  color: #000;
}
.pane.price {
  border-top: 0;
}
.pane.rsi {
  border-top-width: 1px;
}
.pane svg {
  position: absolute;
  width: 100%;
  height: 100%;
  shape-rendering: crispEdges;
}
.pane-label {
  position: absolute;
  top: 1px;
  left: 5px;
}
.axis {
  position: relative;
  font: 11px/14px "Liberation Sans", "Noto Sans CJK JP", sans-serif;
}
.axis span,
.axis strong {
  position: absolute;
  left: 2px;
  transform: translateY(-50%);
}
.axis strong {
  left: 0;
  padding: 0 2px;
  border: 1px solid #000;
  background: #ff0;
  color: #000;
  font-weight: 400;
}
.readout {
  position: absolute;
  top: 302px;
  left: 29px;
  width: 149px;
  height: 273px;
  padding-bottom: 2px;
  border: 1px solid #000;
  border-spacing: 0;
  background: #d0e0ff;
  color: #000;
  line-height: 13px;
}
.readout th,
.readout td {
  padding: 0;
  font-weight: 400;
  text-align: left;
  white-space: nowrap;
}
.readout td,
.readout thead th {
  padding-right: 3px;
  font-family: "Liberation Sans", "Noto Sans CJK JP", sans-serif;
  text-align: right;
}
.readout td {
  font-size: 11px;
}
.time-axis {
  position: relative;
  height: 21px;
  margin: 0 40px 0 5px;
}
.time-axis span {
  position: absolute;
  top: 3px;
  transform: translateX(-50%);
}
.time-axis span::before {
  content: "";
  position: absolute;
  top: -3px;
  left: 50%;
  width: 1px;
  height: 3px;
  background: #fff;
}
.time-axis .bold {
  font-weight: 700;
}
</style>
